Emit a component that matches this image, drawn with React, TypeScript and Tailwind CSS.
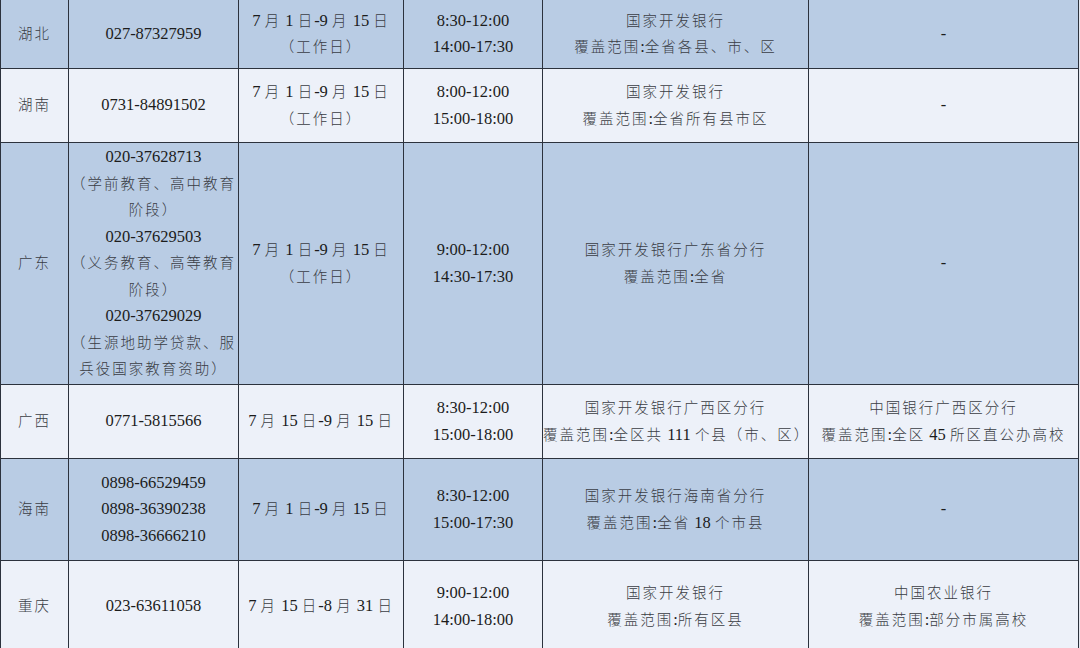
import React from 'react';

type Row = {
  province: string;
  phone: string[];
  dates: string[];
  hours: string[];
  bank: string[];
  school: string[];
  height: string;
  blue: boolean;
};

// 各省份生源地贷款受理信息
const rows: Row[] = [
  {
    province: '湖北',
    phone: ['027-87327959'],
    dates: ['7 月 1 日-9 月 15 日', '（工作日）'],
    hours: ['8:30-12:00', '14:00-17:30'],
    bank: ['国家开发银行', '覆盖范围:全省各县、市、区'],
    school: ['-'],
    height: 'h-[69px]',
    blue: true,
  },
  {
    province: '湖南',
    phone: ['0731-84891502'],
    dates: ['7 月 1 日-9 月 15 日', '（工作日）'],
    hours: ['8:00-12:00', '15:00-18:00'],
    bank: ['国家开发银行', '覆盖范围:全省所有县市区'],
    school: ['-'],
    height: 'h-[74px]',
    blue: false,
  },
  {
    province: '广东',
    phone: [
      '020-37628713',
      '（学前教育、高中教育',
      '阶段）',
      '020-37629503',
      '（义务教育、高等教育',
      '阶段）',
      '020-37629029',
      '（生源地助学贷款、服',
      '兵役国家教育资助）',
    ],
    dates: ['7 月 1 日-9 月 15 日', '（工作日）'],
    hours: ['9:00-12:00', '14:30-17:30'],
    bank: ['国家开发银行广东省分行', '覆盖范围:全省'],
    school: ['-'],
    height: 'h-[242px]',
    blue: true,
  },
  {
    province: '广西',
    phone: ['0771-5815566'],
    dates: ['7 月 15 日-9 月 15 日'],
    hours: ['8:30-12:00', '15:00-18:00'],
    bank: ['国家开发银行广西区分行', '覆盖范围:全区共 111 个县（市、区）'],
    school: ['中国银行广西区分行', '覆盖范围:全区 45 所区直公办高校'],
    height: 'h-[74px]',
    blue: false,
  },
  {
    province: '海南',
    phone: ['0898-66529459', '0898-36390238', '0898-36666210'],
    dates: ['7 月 1 日-9 月 15 日'],
    hours: ['8:30-12:00', '15:00-17:30'],
    bank: ['国家开发银行海南省分行', '覆盖范围:全省 18 个市县'],
    school: ['-'],
    height: 'h-[102px]',
    blue: true,
  },
  {
    province: '重庆',
    phone: ['023-63611058'],
    dates: ['7 月 15 日-8 月 31 日'],
    hours: ['9:00-12:00', '14:00-18:00'],
    bank: ['国家开发银行', '覆盖范围:所有区县'],
    school: ['中国农业银行', '覆盖范围:部分市属高校'],
    height: 'h-[92px]',
    blue: false,
  },
];

// split into CJK / latin runs so the song-style spacing can be imitated
const cjk = /([\u3000-\u303f\u4e00-\u9fff\uff00-\uffef]+)/;

function Line({ text }: { text: string }) {
  const parts = text.split(cjk).filter(Boolean);
  return (
    <div className="whitespace-nowrap">
      {parts.map((p, i) =>
        cjk.test(p) ? (
          <span key={i} className="text-[14.5px] tracking-[2px] font-light text-[#3a3d44]">
            {p}
          </span>
        ) : (
          <span key={i}>{p}</span>
        )
      )}
    </div>
  );
}

function Cell({ lines }: { lines: string[] }) {
  return (
    <td className="border border-[#2c323d] text-center align-middle p-0">
      {lines.map((l, i) => (
        <Line key={i} text={l} />
      ))}
    </td>
  );
}

export default function App() {
  return (
    <div className="w-[1080px] h-[648px] overflow-hidden bg-[#e4e8f0]">
      <table
        className="-mt-[1px] border-collapse table-fixed w-[1078px] text-[16.5px] leading-[26.5px] text-[#1c1c1c]"
        style={{ fontFamily: '"Liberation Serif", "Noto Sans CJK SC", serif' }}
      >
        <colgroup>
          <col className="w-[68px]" />
          <col className="w-[170px]" />
          <col className="w-[165px]" />
          <col className="w-[139px]" />
          <col className="w-[266px]" />
          <col className="w-[270px]" />
        </colgroup>
        <tbody>
          {rows.map((r) => (
            <tr key={r.province} className={`${r.height} ${r.blue ? 'bg-[#b9cce4]' : 'bg-[#edf1f9]'}`}>
              <Cell lines={[r.province]} />
              <Cell lines={r.phone} />
              <Cell lines={r.dates} />
              <Cell lines={r.hours} />
              <Cell lines={r.bank} />
              <Cell lines={r.school} />
            </tr>
          ))}
        </tbody>
      </table>
    </div>
  );
}
